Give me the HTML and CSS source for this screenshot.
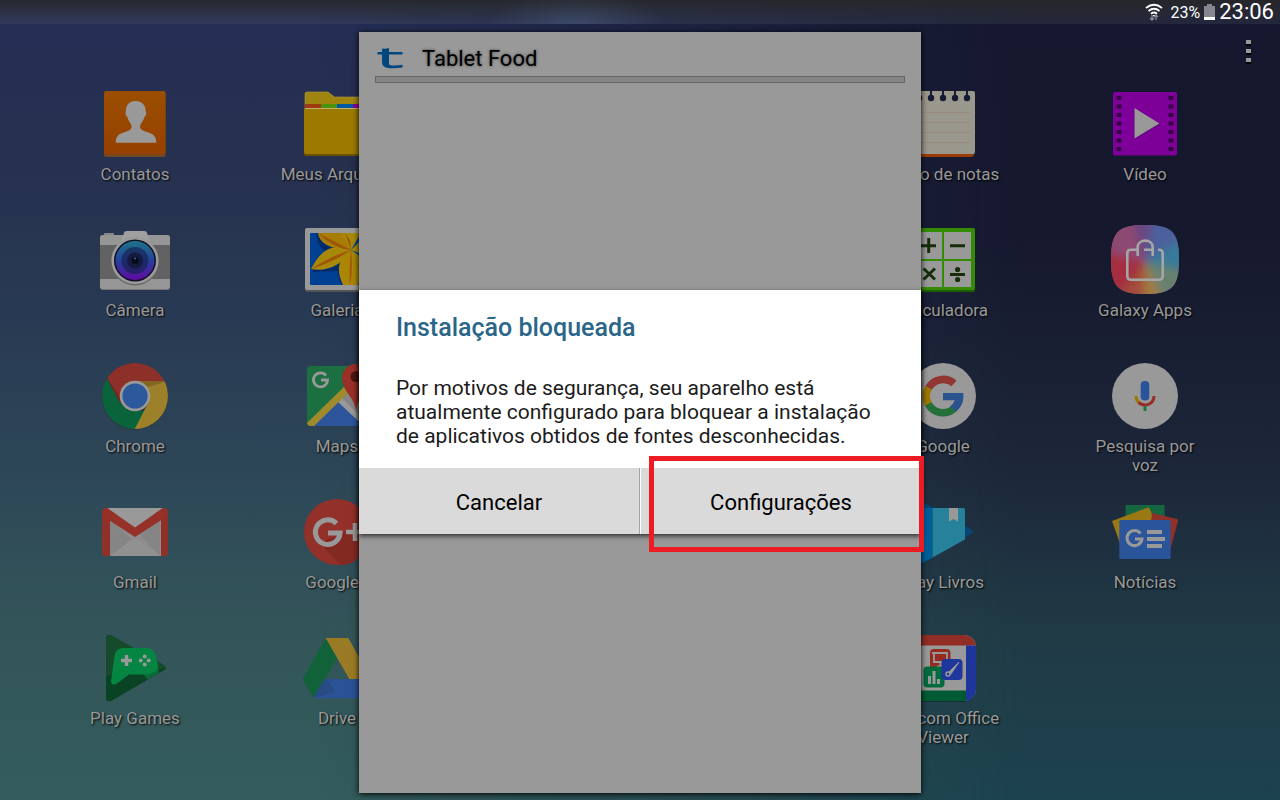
FILE: index.html
```html
<!DOCTYPE html>
<html lang="pt-BR">
<head>
<meta charset="utf-8">
<meta name="viewport" content="width=device-width, initial-scale=1">
<title>Instalação bloqueada</title>
<link rel="stylesheet" href="styles.css">
</head>
<body>
<header class="status">
  <svg class="wifi" viewBox="0 0 18 18" aria-hidden="true"><g fill="none" stroke="#fff" stroke-width="1.8"><path d="M1 5Q9-1.500 17 5M3.500 8Q9 3.500 14.500 8M6 10.800Q9 8.300 12 10.800"/></g><path d="M7.500 12h3L9 14z" fill="#fff"/><path d="M7 12v5M5 15l2 2 2-2M11 17v-5M9 14l2-2 2 2" fill="none" stroke="#8b8c96" stroke-width="1.300"/></svg>
  <span class="percent">23%</span>
  <svg class="battery" viewBox="0 0 11 16" aria-hidden="true"><path d="M3 0h5v2h3v14H0V2h3z" fill="#85868f"/><path d="M0 13h11v3H0z" fill="#fff"/></svg>
  <time class="clock">23:06</time>
</header>

<main class="home">
  <button class="more" type="button" aria-label="Mais opções"><svg viewBox="0 0 6 24"><path d="M0 1h5v5H0zm0 9h5v5H0zm0 9h5v5H0z" fill="#000"/><path d="M0 0h5v4H0zm0 9h5v4H0zm0 9h5v4H0z" fill="#999"/></svg></button>

  <nav class="apps" aria-label="Aplicativos">
    <a class="app c1" href="#"><svg viewBox="0 0 72 72"><rect x="5" y="4" width="61.500" height="65" rx="2" fill="#6f4a25"/><rect x="5" y="3" width="61.500" height="63.500" rx="2" fill="url(#gContact)"/><path d="M36.500 13c-6.500 0-9.500 4.500-9.500 9 0 1-.6 1.500-.4 3.500.2 2 .9 3 1.800 3.500.8 4 3.600 6.500 4.100 9 .3 4-3.500 5-8 6.500-5 1.700-7.800 4-7.800 10.300h40.600c0-6.300-2.800-8.600-7.800-10.300-4.500-1.500-8.800-2.500-8.500-6.500.5-2.500 3.600-5 4.400-9 .9-.5 1.600-1.500 1.800-3.500.2-2-.6-2.500-.6-3.500 0-4.500-3.600-9-10.100-9z" fill="#999"/></svg><span>Contatos</span></a>
    <a class="app c2" href="#"><svg viewBox="0 0 72 72"><path d="M4 6q0-2 2-2h21l6.500 5H67q1.500 0 1.500 2v11H4z" fill="#9f8410" stroke="#b39c45" stroke-width=".6"/><path d="M4 16h16v4H4z" fill="#a03911"/><path d="M20 16h16v4H20z" fill="#4b940a"/><path d="M36 16h16v4H36z" fill="#0058a0"/><path d="M52 16h16v4H52z" fill="#8b009a"/><path d="M3 22h66v44q0 2-2 2H5q-2 0-2-2z" fill="#6b5200"/><path d="M3 21h66v43q0 2-2 2H5q-2 0-2-2z" fill="#9c7a00"/><path d="M4 20.500h64" stroke="#c3af65"/></svg><span>Meus Arquivos</span></a>
    <a class="app c5" href="#"><svg viewBox="0 0 72 72"><path d="M4 8h63v59l-2 2H4z" fill="#9a3c05"/><path d="M4 3h62q2 0 2 2v59q0 2-2 2H4z" fill="#9a988c"/><g fill="#171a33"><circle cx="12" cy="10" r="3.200"/><circle cx="24" cy="10" r="3.200"/><circle cx="36" cy="10" r="3.200"/><circle cx="48" cy="10" r="3.200"/><circle cx="60" cy="10" r="3.200"/><path d="M11 3h2v6h-2zm12 0h2v6h-2zm12 0h2v6h-2zm12 0h2v6h-2zm12 0h2v6h-2z"/></g><path d="M8 24.500h55M8 34.500h55M8 44.500h55M8 54.500h55" stroke="#9b8775" stroke-width=".8"/></svg><span>Bloco de notas</span></a>
    <a class="app c6" href="#"><svg viewBox="0 0 72 72"><rect x="4" y="4" width="64" height="63.500" rx="2" fill="#7d0099"/><path d="M10 8v55M62 8v55" stroke="#380049" stroke-width="5" stroke-dasharray="4 4.500"/><path d="M25.500 20.500v30.500L51 36z" fill="#450058"/><path d="M25.500 20v30.500l25-15z" fill="#999"/></svg><span>Vídeo</span></a>

    <a class="app c1" href="#"><svg viewBox="0 0 72 72"><rect x="1" y="11" width="70" height="55" rx="3" fill="#777"/><rect x="5" y="9" width="10" height="5" rx="1" fill="#888"/><rect x="1" y="11" width="70" height="54" rx="3" fill="#969696"/><path d="M1 21h70v34H1z" fill="#626262"/><path d="M25 9q0-2 3-2h17q3 0 3 2l3 8H22z" fill="#a0a0a0"/><circle cx="36" cy="37.500" r="24" fill="#6a6a6a"/><circle cx="36" cy="36.500" r="23.500" fill="#9c9c9c"/><circle cx="36" cy="36.500" r="21" fill="#100f27"/><circle cx="36" cy="36.500" r="19.500" fill="url(#gLens)"/><circle cx="36" cy="36.500" r="13.500" fill="#17204f" opacity=".65"/><circle cx="36" cy="36.500" r="8" fill="#171a40"/><circle cx="36" cy="36.500" r="3.500" fill="#09091c"/><circle cx="36" cy="34.500" r="1" fill="#28768b"/></svg><span>Câmera</span></a>
    <a class="app c2" href="#"><svg viewBox="0 0 72 72"><rect x="4" y="5" width="64" height="63" rx="2" fill="#555"/><rect x="4" y="4" width="64" height="62" rx="2" fill="#999"/><rect x="9" y="9" width="54" height="52" rx="1" fill="#004093"/><path d="M15 9q1 17 16 21-12 4-20 18l26-1q0 8 4 14l5-30-10-10z" fill="#002b6f"/><path d="M17 9Q19 25 50 26L44 9z" fill="#a87d06"/><path d="M50 26C30 19 20 26 10 45q14 3 27-5 8-5 13-14z" fill="#a88808"/><path d="M50 26C35 35 36 49 42 61h15c4-12 1-22-7-35z" fill="#aa8506"/><path d="M50 26L40 9h20zM50 26l13-13v18zM50 26l13 9v18z" fill="#a88a08"/><path d="M50 26Q33 25 17 9zM50 26Q32 31 10 45 33 38 50 26zM50 26q-2 20-1 35 3-15 1-35zM50 26L44 9l5 7z" fill="#9d5608"/></svg><span>Galeria</span></a>
    <a class="app c5" href="#"><svg viewBox="0 0 72 72"><rect x="4" y="5" width="64" height="63" rx="2" fill="#1d5c00"/><rect x="4" y="4" width="64" height="62" rx="2" fill="#338c04"/><path d="M8 8h27v27H8zm29 0h27v27H37zM8 37h27v26H8zm29 0h27v26H37z" fill="#999"/><path d="M14 21.700h15M21.700 14v15M43 21.700h15M16.500 44.500l11.500 11m0-11l-11.500 11M43 50.500h15" stroke="#172d08" stroke-width="3"/><circle cx="50.600" cy="45.500" r="2.600" fill="#172d08"/><circle cx="50.600" cy="55.500" r="2.600" fill="#172d08"/></svg><span>Calculadora</span></a>
    <a class="app c6" href="#"><svg viewBox="0 0 72 72"><clipPath id="sq"><path d="M36 1c27 0 34 7 34 34.500S63 70 36 70 2 63 2 35.500 9 1 36 1z"/></clipPath><g clip-path="url(#sq)"><path d="M0 0h72v72H0z" fill="#78506f"/><g filter="url(#soft)"><path d="M36 38L-10 20v55h30z" fill="#a52f40"/><path d="M36 38L-15 25V-15h40z" fill="#8c4a72"/><path d="M36 38L20-15h30z" fill="#694781"/><path d="M36 38L45-15h45v30z" fill="#4c609c"/><path d="M36 38L90 5v50z" fill="#377a99"/><path d="M36 38l54 12v40H55z" fill="#68816e"/><path d="M36 38l24 52H30z" fill="#a37c3c"/><path d="M36 38l-2 52H-5z" fill="#a34c3d"/></g></g><path d="M29 25.700H22q-3.700 0-3.700 3.700v22.500q0 3.800 3.700 3.800h28q3.700 0 3.700-3.800V29.400q0-3.700-3.700-3.700h-1M35 25.700h9M28.700 32v-9c0-8.500 15-8.500 15 0v9" fill="none" stroke="#a6a6a6" stroke-width="2.600"/></svg><span>Galaxy Apps</span></a>

    <a class="app c1" href="#"><svg viewBox="0 0 72 72"><clipPath id="disc"><circle cx="36" cy="36" r="33"/></clipPath><circle cx="36" cy="36.600" r="33.200" fill="#26373c"/><g clip-path="url(#disc)"><path d="M0 0h72v21H36L23 44 8 18z" fill="#8d3029"/><path d="M36 21h36v51H32l17-28z" fill="#9d802a"/><path d="M0 10l8 9 15 25 13 7h9L30 80H0z" fill="#0a643b"/><path d="M39 21h30l-20 6z" fill="#836522"/><path d="M8 18l14 27-1-8z" fill="#7b231f"/></g><circle cx="36" cy="36" r="15.300" fill="#999"/><circle cx="36" cy="36" r="12.600" fill="#2c589c"/></svg><span>Chrome</span></a>
    <a class="app c2" href="#"><svg viewBox="0 0 72 72"><clipPath id="mapclip"><rect x="6" y="6" width="60" height="60" rx="4"/></clipPath><g clip-path="url(#mapclip)"><path d="M0 0h72v72H0z" fill="#1b6f41"/><path d="M36 41l30-30v58z" fill="#858585"/><path d="M4 72l33-31 31 31z" fill="#2c559c"/><path d="M36.500 41.500l4-4L68 65v6z" fill="#999"/><path d="M4 65l47-46v10L10 69z" fill="#9f8a2c"/></g><path d="M25 15.500a7 7 0 1 0 1.500 4.500H20" fill="none" stroke="#999" stroke-width="2.800"/><path d="M55 51c-1-13-13-19-14-32C40-1 70-1 69 19c-1 13-13 19-14 32z" fill="#993027"/><circle cx="55" cy="16.700" r="5.500" fill="#4b1513"/></svg><span>Maps</span></a>
    <a class="app c5" href="#"><svg viewBox="0 0 72 72"><circle cx="36" cy="36" r="33" fill="#999"/><g fill="none" stroke-width="7.600"><path d="M21.500 28A16.600 16.600 0 0 1 47 23.500" stroke="#913630"/><path d="M21.500 44.500a16.600 16.600 0 0 1 0-16.800" stroke="#9c7706"/><path d="M47 48.500a16.600 16.600 0 0 1-25.700-4.500" stroke="#237038"/></g><path d="M36 33h20.200c1 8-1.500 14-7 18.500L43 46.500q3.500-2.500 4.800-6.200H36z" fill="#29528f"/></svg><span>Google</span></a>
    <a class="app c6" href="#"><svg viewBox="0 0 72 72"><circle cx="36" cy="36" r="33" fill="#999"/><rect x="31.700" y="21" width="8.600" height="19.500" rx="4" fill="#29549b"/><g fill="none" stroke-width="3"><path d="M27 36q0 4 3 7" stroke="#9c7706"/><path d="M29.500 42.500c6 5 15.500 2 15.500-6.500" stroke="#962c27"/><path d="M36 46v5" stroke="#20783c"/></g></svg><span>Pesquisa por voz</span></a>

    <a class="app c1" href="#"><svg viewBox="0 0 72 72"><path d="M3 17q0-5 5-5h56q5 0 5 5v40q0 3-3 3H6q-3 0-3-3z" fill="#8f3029"/><path d="M11 18h51v42H11z" fill="#8d8d8d"/><path d="M11 24v36l22-16zM40 38l21 22V24z" fill="#858585"/><path d="M11 60l21-16 5-2 24 18z" fill="#919191"/><path d="M8 12h56L36 31.500z" fill="#999"/><path d="M3 17q0-5 5-5l28 19.500L64 12q5 0 5 5 0 2-2 4L36 41 5 21q-2-2-2-4z" fill="#963129"/></svg><span>Gmail</span></a>
    <a class="app c2" href="#"><svg viewBox="0 0 72 72"><circle cx="36" cy="36" r="33" fill="#923029"/><path d="M18 47l22 22q22 0 29-31L60 30z" fill="#822922"/><path d="M35.500 27.500a12.300 12.300 0 1 0 3.500 9.500H27" fill="none" stroke="#999" stroke-width="5"/><path d="M45 36h18M54 27v18" stroke="#999" stroke-width="4.500"/></svg><span>Google+</span></a>
    <a class="app c5" href="#"><svg viewBox="0 0 72 72"><path d="M7 5q0-3 4-2l53 30q4 3 0 5L11 69q-4 1-4-2z" fill="#06456f"/><path d="M7 12h18v50L7 71z" fill="#005e99"/><path d="M25.500 12H56q2 0 2 2v29.500L25.500 61.500z" fill="#26819a"/><path d="M42 12h9v13.500L46.500 23 42 25.500z" fill="#999"/></svg><span>Play Livros</span></a>
    <a class="app c6" href="#"><svg viewBox="0 0 72 72"><path d="M16.500 9h39v20h-39z" fill="#156742"/><path d="M3 25l36-13.500q1 0 1.500 1L50 34 14 56z" fill="#9a7914"/><path d="M43 17l25 6q1.500.5 1 2l-8 30-20-20z" fill="#8f3029"/><rect x="10.300" y="24" width="51.300" height="39" rx="1.500" fill="#2b559b"/><path d="M31.500 37.500A7.500 7.500 0 1 0 33 43h-7" fill="none" stroke="#999" stroke-width="3"/><path d="M38 36h15M38 43h18M38 50h15" stroke="#999" stroke-width="4"/></svg><span>Notícias</span></a>

    <a class="app c1" href="#"><svg viewBox="0 0 72 72"><path d="M7 6q0-4 5-3l53 30q4 3 0 5L12 69q-5 1-5-3z" fill="#154b2b"/><path d="M7 44l60-8q0 1-2 2L12 69q-5 1-5-3z" fill="#0a4324"/><path d="M56 33l3 1 1 7-11 6.500-6-6z" fill="#0a6a39"/><path d="M24 16h23q8 0 10 8l2 9q0 8-11 9.500H30L18.500 51q-6.500 4-6.500-2l3.500-25Q17 16 24 16z" fill="#048541"/><path d="M22 28.500h11M27.500 23v11" stroke="#999" stroke-width="3.500"/><g fill="#999"><circle cx="45.700" cy="24.500" r="2"/><circle cx="45.700" cy="32.500" r="2"/><circle cx="41.700" cy="28.500" r="2"/><circle cx="49.700" cy="28.500" r="2"/></g></svg><span>Play Games</span></a>
    <a class="app c2" href="#"><svg viewBox="0 0 72 72"><path d="M24.700 6L1.700 47.300 12.300 66l24-39.700z" fill="#126239"/><path d="M24.700 6h22.600l23 41H48.300z" fill="#9a7b25"/><path d="M12.300 66l11-18.700h47L60 66z" fill="#2b5296"/><path d="M23.300 47.300L12.300 66 34 60l-8-12.700z" fill="#294b83"/></svg><span>Drive</span></a>
    <a class="app c5" href="#"><svg viewBox="0 0 72 72"><clipPath id="office"><rect x="3" y="3" width="66" height="66" rx="12"/></clipPath><rect x="3" y="4" width="66" height="66" rx="12" fill="#142f38"/><g clip-path="url(#office)"><path d="M0 0h72v72H0z" fill="#999"/><path d="M0 0h72v13.500H0z" fill="#902d25"/><path d="M59 13.500h13V72H59z" fill="#1e369b"/><path d="M0 58.500h59V72H0z" fill="#005b34"/></g><rect x="23" y="17" width="20.500" height="20.500" rx="4" fill="#942a20"/><path d="M25 21h16M27 21v9h13v-9M33.500 30v4M30 34.500h8" fill="none" stroke="#999" stroke-width="1.800"/><rect x="16.500" y="34.500" width="21" height="21" rx="4" fill="#006b3c"/><path d="M22.500 52v-8M27 52V39M31.500 52v-5" stroke="#999" stroke-width="3"/><rect x="34.500" y="27" width="21" height="21" rx="4" fill="#1d379c"/><path d="M52 30l-8 12-2-2z" fill="#999" stroke="#999"/><circle cx="41" cy="42" r="2" fill="none" stroke="#999" stroke-width="1.500"/></svg><span>Hancom Office Viewer</span></a>
  </nav>
</main>

<div class="overlay installer-layer">
  <section class="installer" aria-label="Tablet Food">
    <div class="installer-head">
      <svg viewBox="0 0 26 22" aria-hidden="true"><path d="M5 1.500Q9 2 12 1v4h13.500v2.500H12V16q0 2.500 3 2.500 5 .3 10.500-.7v2.700q-6 1-12.500.7-8-.2-8-6.200V7.500H.5V5H5z" fill="#00477f"/></svg>
      <h1>Tablet Food</h1>
    </div>
    <div class="bar"></div>
  </section>
</div>

<div class="overlay">
  <section class="dialog" role="alertdialog" aria-labelledby="dlg-title" aria-describedby="dlg-text">
    <h2 id="dlg-title">Instalação bloqueada</h2>
    <p id="dlg-text">Por motivos de segurança, seu aparelho está atualmente configurado para bloquear a instalação de aplicativos obtidos de fontes desconhecidas.</p>
    <div class="actions">
      <button type="button">Cancelar</button>
      <button class="settings" type="button">Configurações</button>
    </div>
  </section>
</div>

<svg class="defs" aria-hidden="true"><defs>
  <linearGradient id="gContact" x2="0" y2="1"><stop stop-color="#9b4e00"/><stop offset="1" stop-color="#964000"/></linearGradient>
  <linearGradient id="gLens" x2="0" y2="1"><stop stop-color="#1d7388"/><stop offset=".5" stop-color="#24429b"/><stop offset="1" stop-color="#6109a0"/></linearGradient>
  <filter id="soft"><feGaussianBlur stdDeviation="4"/></filter>
</defs></svg>
</body>
</html>
```

FILE: styles.css
```css
* { box-sizing: border-box; }

body {
  margin: 0;
  min-height: 100vh;
  position: relative;
  overflow: hidden;
  font-family: Roboto, "Noto Sans", sans-serif;
  background: linear-gradient(#252f58 0%, #26304f 18%, #283953 38%, #2d4657 58%, #335559 78%, #345c5c 100%);
}

/* darker right-hand side of the wallpaper */
body::before {
  content: "";
  position: absolute;
  inset: 0;
  background: linear-gradient(#15172e 0%, #16182e 30%, #1c2639 58%, #203945 78%, #1c424e 100%);
  -webkit-mask-image: linear-gradient(to right, transparent 25%, #000 80%);
  mask-image: linear-gradient(to right, transparent 25%, #000 80%);
}

.status {
  position: relative;
  display: flex;
  justify-content: flex-end;
  align-items: center;
  height: 24px;
  padding-right: 6px;
  color: #fff;
  background:
    radial-gradient(ellipse 90px 30px at 45% 100%, rgba(90, 115, 150, .35), transparent),
    linear-gradient(rgba(40, 40, 42, .9), rgba(80, 88, 105, .25));
}
.wifi { width: 18px; height: 18px; margin-right: 8px; }
.percent { font-size: 16px; }
.battery { width: 11px; height: 16px; margin: 0 4px 0 4px; }
.clock { font-size: 22px; line-height: 24px; }

.home { position: relative; display: flex; flex-direction: column; padding: 0 34px; }

.more {
  align-self: flex-end;
  width: 6px;
  height: 24px;
  margin: 16px -6px 24px 0;
  padding: 0;
  border: 0;
  background: none;
}
.more svg { display: block; width: 6px; height: 24px; }

.apps {
  display: grid;
  grid-template-columns: repeat(6, 1fr);
  grid-auto-rows: 136px;
}
.app {
  display: flex;
  flex-direction: column;
  align-items: center;
  gap: 5px;
  color: #999;
  font-size: 17px;
  line-height: 19px;
  text-align: center;
  text-decoration: none;
  text-shadow: 1px 1px 2px #000;
}
.app svg { width: 72px; height: 72px; }
.app span { max-width: 124px; }
.c1 { grid-column: 1; }
.c2 { grid-column: 2; }
.c5 { grid-column: 5; }
.c6 { grid-column: 6; }

.overlay {
  position: absolute;
  inset: 24px 0 0;
  display: flex;
  justify-content: center;
  align-items: center;
}
.installer-layer { align-items: stretch; padding: 8px 0 7px; }

.installer,
.dialog {
  width: 90%;
  max-width: 562px;
}
.installer {
  padding: 0 16px;
  background: #999;
  box-shadow: 0 1px 6px #000;
}
.installer-head {
  display: flex;
  align-items: center;
  gap: 19px;
  height: 44px;
  padding: 8px 2px 0;
}
.installer-head svg { width: 26px; height: 22px; }
.installer-head h1 {
  margin: 0;
  color: #000;
  font-size: 22px;
  font-weight: 400;
  text-shadow: 0 0 3px #444;
}
.bar { height: 7px; border: 1px solid #666; background: #858585; }

.dialog {
  background: #fff;
  box-shadow: 0 2px 5px rgba(0, 0, 0, .7);
}
.dialog h2 {
  margin: 0;
  padding: 23px 37px 0;
  color: #2b6689;
  font-size: 25px;
  line-height: 30px;
  font-weight: 500;
}
.dialog p {
  margin: 0;
  padding: 33px 37px 20px;
  color: #1c1c1c;
  font-size: 21px;
  line-height: 24px;
}
.actions { display: grid; grid-template-columns: 1fr 1fr; }
.actions button {
  position: relative;
  height: 66px;
  padding: 2px 0 0;
  border: 0;
  background: #dadada;
  color: #000;
  font: 22px Roboto, "Noto Sans", sans-serif;
}
.actions button:first-child { border-right: 1px solid #a5a5a5; }
.actions button:last-child { border-left: 1px solid #fff; }

/* highlight frame round the settings button */
.settings::after {
  content: "";
  position: absolute;
  inset: -12px -3px -18px 8px;
  border: 5px solid #ed1c24;
}

.defs { position: absolute; width: 0; height: 0; }
```
